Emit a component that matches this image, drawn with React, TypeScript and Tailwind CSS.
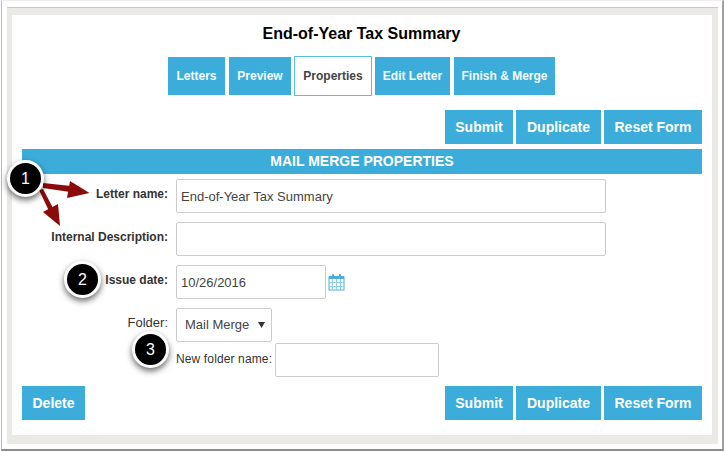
const font = { fontFamily: '"Liberation Sans", Arial, sans-serif' };

const Tab = ({ label, active, className }: { label: string; active?: boolean; className: string }) => (
  <div
    className={`flex items-center justify-center text-xs font-bold ${className} ${
      active
        ? "h-10 border border-[#5bbce4] bg-white text-[#444444]"
        : "h-[38px] bg-[#3cadda] text-[#f4fafd]"
    }`}
  >
    {label}
  </div>
);

const ActionButton = ({ label, className }: { label: string; className: string }) => (
  <div className={`flex h-[34px] items-center justify-center bg-[#3cadda] text-sm font-bold text-white ${className}`}>
    {label}
  </div>
);

const Actions = () => (
  <div className="flex gap-[3px]">
    <ActionButton label="Submit" className="w-[68px]" />
    <ActionButton label="Duplicate" className="w-[85px]" />
    <ActionButton label="Reset Form" className="w-[98px]" />
  </div>
);

const FormRow = ({ label, plain, children }: { label: string; plain?: boolean; children: React.ReactNode }) => (
  <div className="flex items-start">
    <div className={`w-[146px] text-right text-[#333333] ${plain ? "pt-[5px] text-[13px]" : "pt-[7px] text-xs font-bold"}`}>{label}</div>
    <div className="ml-2 flex items-center">{children}</div>
  </div>
);

const Input = ({ value, className }: { value?: string; className: string }) => (
  <div className={`flex h-[34px] items-center rounded-[2px] border border-[#cccccc] bg-white pl-1 pt-[2px] text-[13px] text-[#444444] ${className}`}>
    {value}
  </div>
);

const Badge = ({ n, className }: { n: number; className: string }) => (
  <div
    className={`absolute flex size-[37px] items-center justify-center rounded-full border-[3px] border-white bg-black text-base text-white shadow-[0_3px_6px_rgba(0,0,0,0.6)] ${className}`}
  >
    {n}
  </div>
);

const CalendarIcon = () => (
  <svg width="17" height="18" viewBox="0 0 17 18" className="ml-[2px]">
    <rect x="1" y="4" width="15" height="13" fill="#ffffff" stroke="#4aaedb" />
    <rect x="1" y="3" width="15" height="3" fill="#4aaedb" />
    <rect x="4" y="1" width="2" height="4" rx="1" fill="#4aaedb" />
    <rect x="11" y="1" width="2" height="4" rx="1" fill="#4aaedb" />
    <path d="M1 9.5H16M1 13.5H16M4.5 6V17M8.5 6V17M12.5 6V17" stroke="#8fcdea" strokeWidth="1" />
  </svg>
);

const Arrows = () => (
  <svg width="100" height="80" viewBox="0 0 100 80" className="absolute left-0 top-[155px]">
    <path d="M43 28 L71 31 L70 37 L43 33 Z" fill="#8b0a0a" />
    <path d="M89.5 38 L67 43 L70 26 Z" fill="#8b0a0a" />
    <path d="M39 35 L43 34 L53 53 L49 56 Z" fill="#8b0a0a" />
    <path d="M60 71 L43 57 L58 49 Z" fill="#8b0a0a" />
  </svg>
);

export default function App() {
  return (
    <div className="relative h-[452px] w-[725px] overflow-hidden bg-white pl-[1px]" style={font}>
      <div className="h-[451px] w-[723px] border-t border-l border-t-[#eeeeee] border-l-[#b8b8b8] border-r-2 border-b-2 border-r-[#a0a0a0] border-b-[#8a8a8a] bg-white pl-[5px] pt-[6px]">
        <div className="h-[437px] w-[711px] border-t border-[#c8c8c8] bg-[#ebe9e6] pl-[5px] pt-[7px]">
          <div className="h-[420px] w-[700px] bg-white pl-[10px] pt-[9px]">
            <div className="w-[680px]">
              <h1 className="h-8 pr-[1px] text-center text-base leading-5 font-bold text-black">End-of-Year Tax Summary</h1>
              <div className="ml-[146px] flex items-center">
                <Tab label="Letters" className="w-[57px]" />
                <Tab label="Preview" className="ml-1 w-[62px]" />
                <Tab label="Properties" active className="ml-[3px] w-[78px]" />
                <Tab label="Edit Letter" className="ml-[3px] w-[75px]" />
                <Tab label="Finish & Merge" className="ml-1 w-[101px]" />
              </div>
              <div className="mt-[14px] flex justify-end">
                <Actions />
              </div>
              <div className="mt-[5px] flex h-[25px] items-center justify-center bg-[#3cadda] pb-[2px] text-sm font-bold text-white">
                MAIL MERGE PROPERTIES
              </div>
              <div className="mt-[5px] flex flex-col gap-[9px]">
                <FormRow label="Letter name:">
                  <Input value="End-of-Year Tax Summary" className="w-[430px]" />
                </FormRow>
                <FormRow label="Internal Description:">
                  <Input className="w-[430px]" />
                </FormRow>
                <FormRow label="Issue date:">
                  <Input value="10/26/2016" className="w-[150px]" />
                  <CalendarIcon />
                </FormRow>
                <FormRow label="Folder:" plain>
                  <div className="flex h-[34px] w-24 items-center justify-between rounded-[2px] border border-[#cccccc] bg-white pl-2 pr-[6px] text-[13px] text-[#444444]">
                    <span>Mail Merge</span>
                    <svg width="7" height="6" viewBox="0 0 7 6">
                      <path d="M0 0H7L3.5 6Z" fill="#333333" />
                    </svg>
                  </div>
                </FormRow>
              </div>
              <div className="ml-[154px] mt-[1px] flex items-center text-xs tracking-[0.13px] text-[#333333]">
                <span className="w-[99px] whitespace-nowrap pb-[2px]">New folder name:</span>
                <Input className="w-[164px]" />
              </div>
              <div className="mt-[9px] flex justify-between">
                <ActionButton label="Delete" className="w-[63px]" />
                <Actions />
              </div>
            </div>
          </div>
        </div>
      </div>
      <Arrows />
      <Badge n={1} className="left-[7px] top-[160px]" />
      <Badge n={2} className="left-[64px] top-[261px]" />
      <Badge n={3} className="left-[132px] top-[331px]" />
    </div>
  );
}
